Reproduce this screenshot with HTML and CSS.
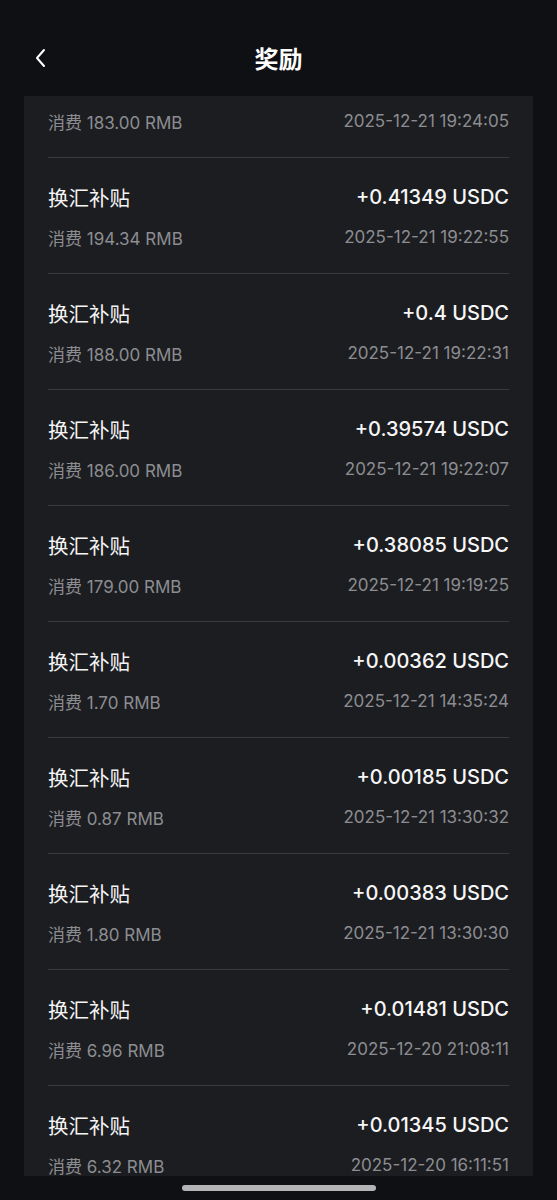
FILE: index.html
```html
<!DOCTYPE html>
<html lang="zh-CN">
  <head>
    <meta charset="UTF-8" />
    <meta name="viewport" content="width=device-width, initial-scale=1.0" />
    <title>奖励</title>
    <link rel="stylesheet" href="styles.css">
  </head>
  <body>
    <header class="nav">
      <button class="back" aria-label="返回">
        <svg width="14" height="20" viewBox="0 0 14 20">
          <path d="M10 2 L3 10 L10 18" fill="none" stroke="#fff" stroke-width="2" stroke-linecap="round" stroke-linejoin="round" />
        </svg>
      </button>
      <h1>奖励</h1>
    </header>

    <main class="viewport">
      <div class="card">
        <!-- scrolled past the top: only the second line is still visible -->
        <div class="row partial">
          <div class="line sub">
            <span>消费 183.00 RMB</span>
            <span>2025-12-21 19:24:05</span>
          </div>
        </div>
        <div class="row">
          <div class="line top">
            <span class="title">换汇补贴</span>
            <span class="amount">+0.41349 USDC</span>
          </div>
          <div class="line sub">
            <span>消费 194.34 RMB</span>
            <span>2025-12-21 19:22:55</span>
          </div>
        </div>
        <div class="row">
          <div class="line top">
            <span class="title">换汇补贴</span>
            <span class="amount">+0.4 USDC</span>
          </div>
          <div class="line sub">
            <span>消费 188.00 RMB</span>
            <span>2025-12-21 19:22:31</span>
          </div>
        </div>
        <div class="row">
          <div class="line top">
            <span class="title">换汇补贴</span>
            <span class="amount">+0.39574 USDC</span>
          </div>
          <div class="line sub">
            <span>消费 186.00 RMB</span>
            <span>2025-12-21 19:22:07</span>
          </div>
        </div>
        <div class="row">
          <div class="line top">
            <span class="title">换汇补贴</span>
            <span class="amount">+0.38085 USDC</span>
          </div>
          <div class="line sub">
            <span>消费 179.00 RMB</span>
            <span>2025-12-21 19:19:25</span>
          </div>
        </div>
        <div class="row">
          <div class="line top">
            <span class="title">换汇补贴</span>
            <span class="amount">+0.00362 USDC</span>
          </div>
          <div class="line sub">
            <span>消费 1.70 RMB</span>
            <span>2025-12-21 14:35:24</span>
          </div>
        </div>
        <div class="row">
          <div class="line top">
            <span class="title">换汇补贴</span>
            <span class="amount">+0.00185 USDC</span>
          </div>
          <div class="line sub">
            <span>消费 0.87 RMB</span>
            <span>2025-12-21 13:30:32</span>
          </div>
        </div>
        <div class="row">
          <div class="line top">
            <span class="title">换汇补贴</span>
            <span class="amount">+0.00383 USDC</span>
          </div>
          <div class="line sub">
            <span>消费 1.80 RMB</span>
            <span>2025-12-21 13:30:30</span>
          </div>
        </div>
        <div class="row">
          <div class="line top">
            <span class="title">换汇补贴</span>
            <span class="amount">+0.01481 USDC</span>
          </div>
          <div class="line sub">
            <span>消费 6.96 RMB</span>
            <span>2025-12-20 21:08:11</span>
          </div>
        </div>
        <div class="row">
          <div class="line top">
            <span class="title">换汇补贴</span>
            <span class="amount">+0.01345 USDC</span>
          </div>
          <div class="line sub">
            <span>消费 6.32 RMB</span>
            <span>2025-12-20 16:11:51</span>
          </div>
        </div>
      </div>
    </main>

    <div class="home-bar"></div>
  </body>
</html>
```

FILE: styles.css
```css
* {
  margin: 0;
  padding: 0;
  box-sizing: border-box;
}

body {
  font-family: 'Inter', 'Noto Sans CJK SC', sans-serif;
  background: #0f1014;
  color: #fff;
  width: 557px;
  height: 1200px;
  overflow: hidden;
}

/* Header */
.nav {
  height: 80px;
  padding-top: 36px;
  position: relative;
}

.nav h1 {
  height: 44px;
  line-height: 44px;
  text-align: center;
  font-size: 24px;
  font-weight: 700;
  font-family: 'Noto Sans CJK SC', sans-serif;
}

.back {
  position: absolute;
  left: 34px;
  top: 48px;
  background: none;
  border: none;
  width: 14px;
  height: 20px;
}

/* List */
.viewport {
  margin: 16px 24px 0 24px;
  height: 1080px;
  overflow: hidden;
  background: #1c1d20;
}

.card {
  padding: 0 24px 0 24px;
}

.row {
  height: 116px;
  padding-top: 27px;
  border-bottom: 1px solid #3a3b3f;
}

.row.partial {
  height: 62px;
  padding-top: 14px;
}

.partial .sub {
  margin-top: 0;
}

.line {
  display: flex;
  justify-content: space-between;
  align-items: center;
}

.top {
  height: 24px;
  font-size: 20px;
}

.title {
  font-family: 'Noto Sans CJK SC', sans-serif;
  font-size: 20.5px;
  color: #f4f4f5;
}

.amount {
  font-weight: 500;
  color: #f6f6f7;
}

.sub {
  margin-top: 17px;
  height: 22px;
  font-size: 17px;
  color: #8c8d92;
}

/* Home indicator */
.home-bar {
  width: 194px;
  height: 6px;
  border-radius: 3px;
  background: #b4b4b6;
  margin: 9px auto 0 auto;
}
```
